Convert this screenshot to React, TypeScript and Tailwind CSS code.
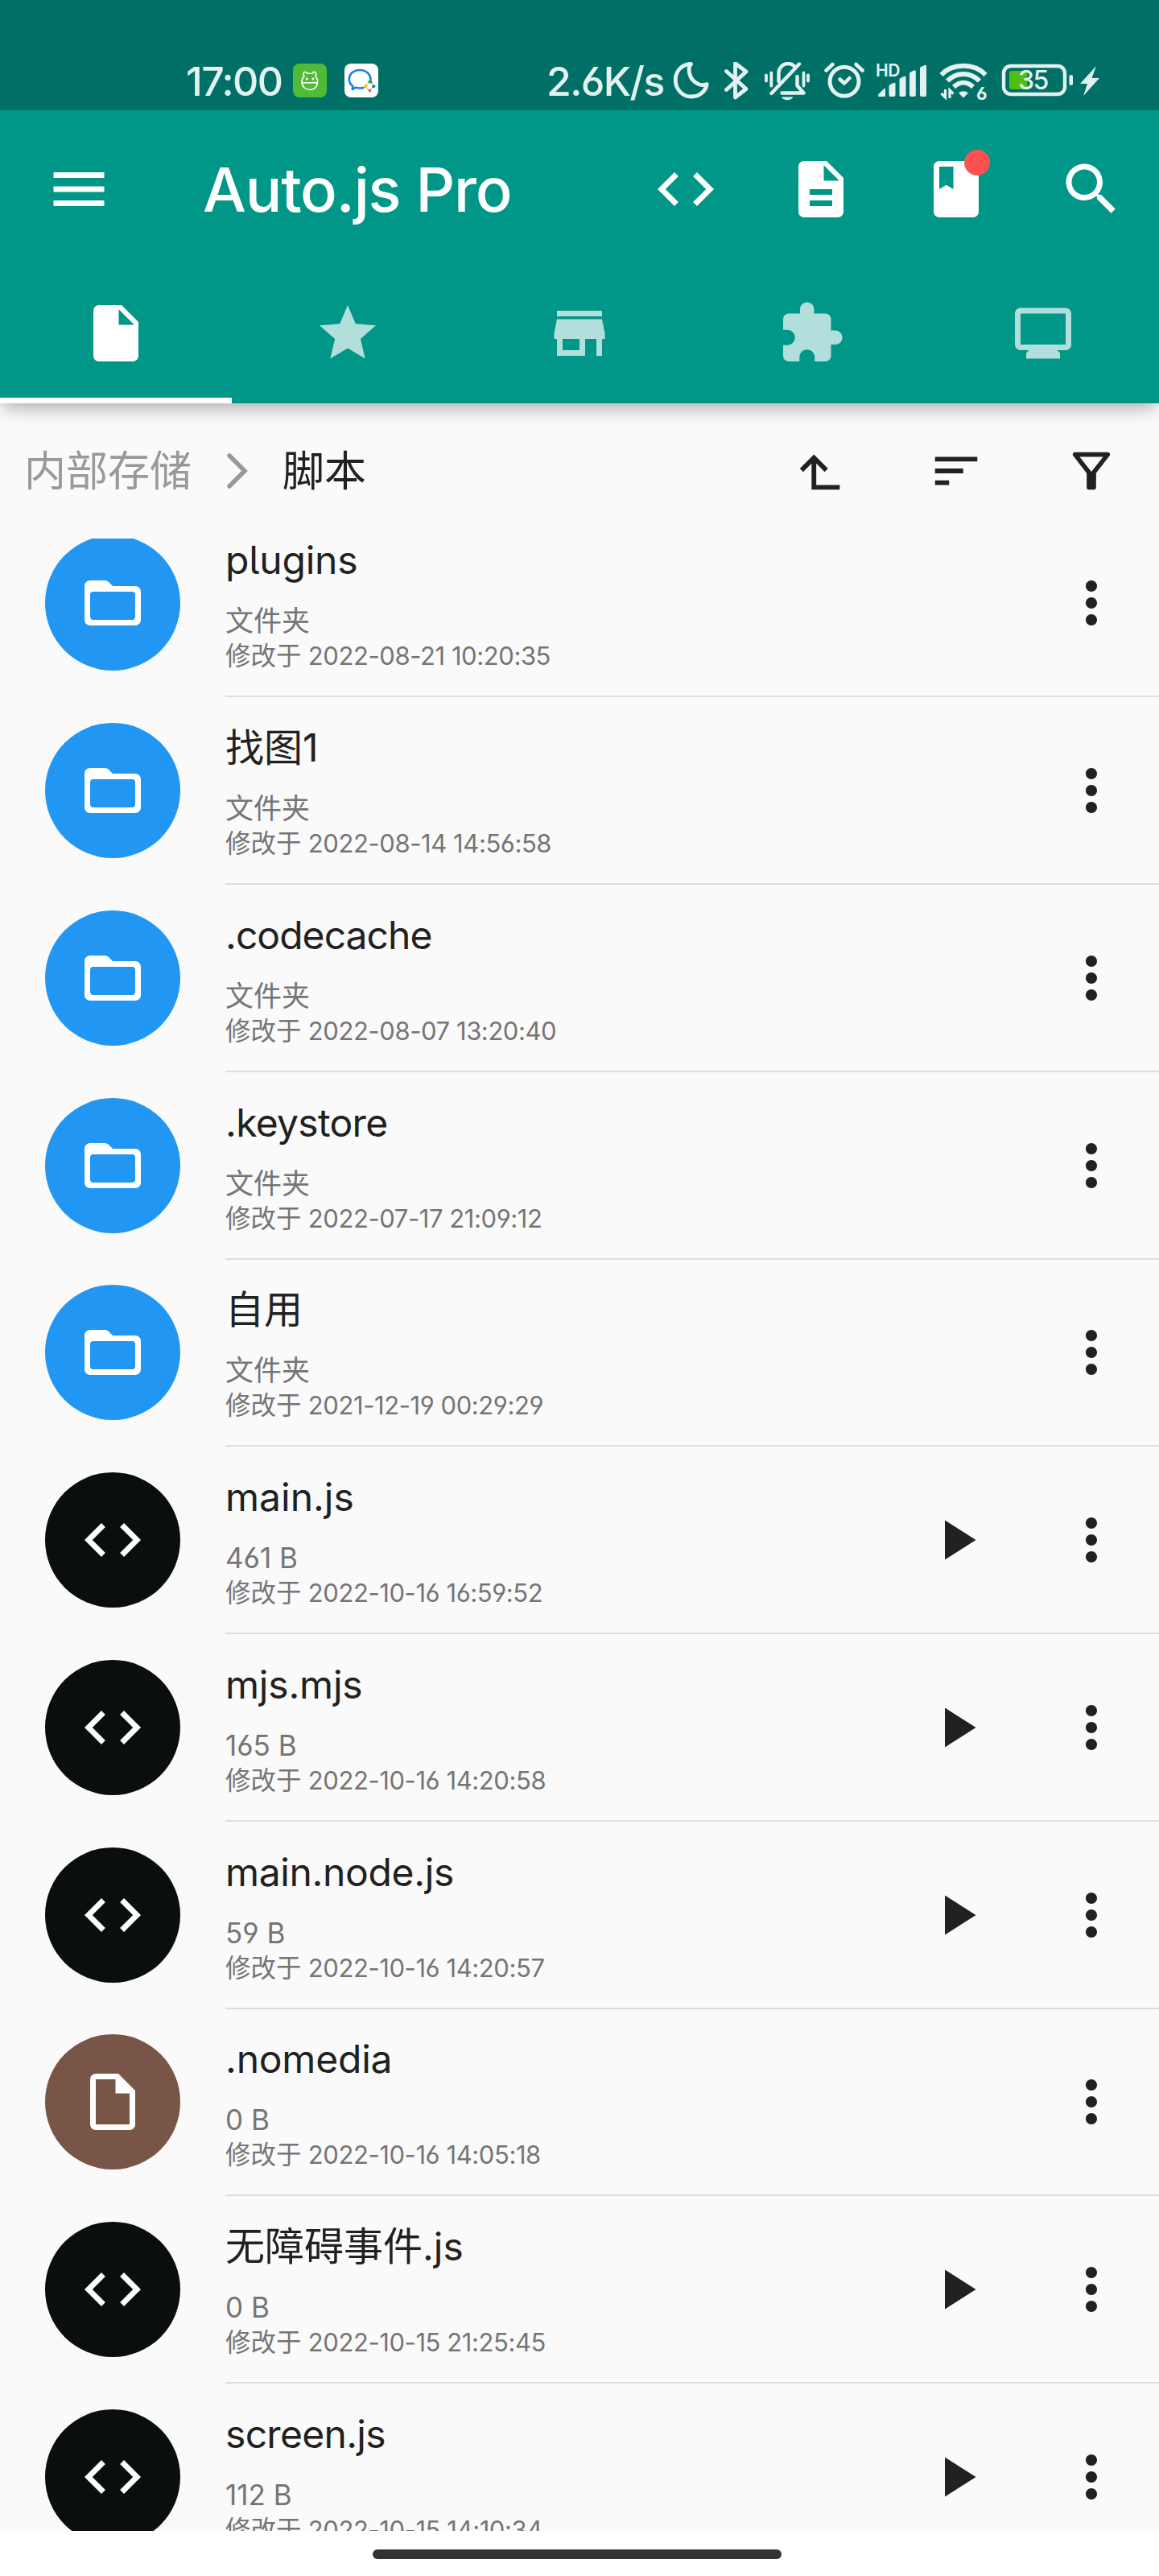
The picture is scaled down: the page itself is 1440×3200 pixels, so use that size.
import type { ReactNode } from "react";

const ICONS = {
  menu: "M3 18h18v-2H3v2zm0-5h18v-2H3v2zm0-7v2h18V6H3z",
  code: "M9.4 16.6L4.8 12l4.6-4.6L8 6l-6 6 6 6 1.4-1.4zm5.2 0l4.6-4.6-4.6-4.6L16 6l6 6-6 6-1.4-1.4z",
  description:
    "M14 2H6c-1.1 0-1.99.9-1.99 2L4 20c0 1.1.89 2 1.99 2H18c1.1 0 2-.9 2-2V8l-6-6zm2 16H8v-2h8v2zm0-4H8v-2h8v2zm-3-5V3.5L18.5 9H13z",
  book: "M18 2H6c-1.1 0-2 .9-2 2v16c0 1.1.9 2 2 2h12c1.1 0 2-.9 2-2V4c0-1.1-.9-2-2-2zM6 4h5v8l-2.5-1.5L6 12V4z",
  search:
    "M15.5 14h-.79l-.28-.27C15.41 12.59 16 11.11 16 9.5 16 5.91 13.09 3 9.5 3S3 5.91 3 9.5 5.91 16 9.5 16c1.61 0 3.09-.59 4.23-1.57l.27.28v.79l5 4.99L20.49 19l-4.99-5zm-6 0C7.01 14 5 11.99 5 9.5S7.01 5 9.5 5 14 7.01 14 9.5 11.99 14 9.5 14z",
  file: "M6 2c-1.1 0-1.99.9-1.99 2L4 20c0 1.1.89 2 1.99 2H18c1.1 0 2-.9 2-2V8l-6-6H6zm7 7V3.5L18.5 9H13z",
  star: "M12 17.27L18.18 21l-1.64-7.03L22 9.24l-7.19-.61L12 2 9.19 8.63 2 9.24l5.46 4.73L5.82 21z",
  store: "M20 4H4v2h16V4zm1 10v-2l-1-5H4l-1 5v2h1v6h10v-6h4v6h2v-6h1zm-9 4H6v-4h6v4z",
  extension:
    "M20.5 11H19V7c0-1.1-.9-2-2-2h-4V3.5C13 2.12 11.88 1 10.5 1S8 2.12 8 3.5V5H4c-1.1 0-1.99.9-1.99 2v3.8H3.5c1.49 0 2.7 1.21 2.7 2.7s-1.21 2.7-2.7 2.7H2V20c0 1.1.9 2 2 2h3.8v-1.5c0-1.49 1.21-2.7 2.7-2.7 1.49 0 2.7 1.21 2.7 2.7V22H17c1.1 0 2-.9 2-2v-4h1.5c1.38 0 2.5-1.12 2.5-2.5S21.88 11 20.5 11z",
  monitor:
    "M20 3H4c-1.1 0-2 .9-2 2v11c0 1.1.9 2 2 2h3l-1 1v2h12v-2l-1-1h3c1.1 0 2-.9 2-2V5c0-1.1-.9-2-2-2zm0 13H4V5h16v11z",
  up: "M15 11l-1.42 1.42L10 8.83V18h10v2H8V8.83l-3.58 3.59L3 11l6-6z",
  sort: "M3 18h6v-2H3v2zM3 6v2h18V6H3zm0 7h12v-2H3v2z",
  filter:
    "M7 6h10l-5.01 6.3L7 6zm-2.75-.39C6.27 8.2 10 13 10 13v6c0 .55.45 1 1 1h2c.55 0 1-.45 1-1v-6s3.72-4.8 5.74-7.39A.998.998 0 0018.95 4H5.04c-.83 0-1.3.95-.79 1.61z",
  folder:
    "M20 6h-8l-1.41-1.41C10.21 4.21 9.7 4 9.17 4H4c-1.1 0-2 .9-2 2v12c0 1.1.9 2 2 2h16c1.1 0 2-.9 2-2V8c0-1.1-.9-2-2-2zm-1 12H5c-.55 0-1-.45-1-1V9c0-.55.45-1 1-1h14c.55 0 1 .45 1 1v8c0 .55-.45 1-1 1z",
  fileOutline:
    "M14 2H6c-1.1 0-1.99.9-1.99 2L4 20c0 1.1.89 2 1.99 2H18c1.1 0 2-.9 2-2V8l-6-6zM6 20V4h7v5h5v11H6z",
  play: "M8 5v14l11-7z",
  more: "M12 8c1.1 0 2-.9 2-2s-.9-2-2-2-2 .9-2 2 .9 2 2 2zm0 2c-1.1 0-2 .9-2 2s.9 2 2 2 2-.9 2-2-.9-2-2-2zm0 6c-1.1 0-2 .9-2 2s.9 2 2 2 2-.9 2-2-.9-2-2-2z",
};

type IconName = keyof typeof ICONS;

function Icon({ name, className = "size-[84px]" }: { name: IconName; className?: string }) {
  return (
    <svg viewBox="0 0 24 24" fill="currentColor" className={`shrink-0 ${className}`}>
      <path d={ICONS[name]} />
    </svg>
  );
}

function Action({ name, className, children }: { name: IconName; className?: string; children?: ReactNode }) {
  return (
    <button className="relative flex h-[168px] w-[168px] items-center justify-center">
      <Icon name={name} className={className} />
      {children}
    </button>
  );
}

/* Status glyphs share one vertical frame: 48px tall, y 77 to 125. */
function StatusIcons() {
  return (
    <>
      <svg className="h-[48px] w-[44px]" viewBox="837 77 44 48" fill="none" stroke="currentColor" strokeWidth="4.8" strokeLinejoin="round">
        <path d="M858.500 79.500C846 80 839.300 89 839.300 99.500c0 11.500 8.500 20.500 20 20.500 9.500 0 17.500-6.500 19-15.500-3.500 1.500-8 1.500-11.500-.5-8-4-11.500-12-10.500-19.500.3-2 1-3.500 2.200-5z" />
      </svg>
      <svg className="ml-[17px] h-[48px] w-[34px]" viewBox="898 77 34 48" fill="none" stroke="currentColor" strokeWidth="4.8" strokeLinejoin="round" strokeLinecap="round">
        <path d="M902.500 88.500l24.500 22-13.500 10.500V78.500L927 89l-24.500 22.500" />
      </svg>
      <svg className="ml-[16px] h-[48px] w-[60px]" viewBox="948 77 60 48" fill="none" stroke="currentColor" strokeWidth="4.4" strokeLinejoin="round" strokeLinecap="round">
        <path d="M952 93.500v7M958.300 90.500v16M998.500 90.500v16M1004 93.500v7" strokeWidth="3.800" />
        <path d="M993 79.500l-34.500 36.500" />
        <path d="M967.500 101V91c0-6.500 5-12 11.500-12 3 0 5.500 1 7.500 2.800M990.500 95v11.500l8 9h-27" />
        <path d="M971 120.500h14.500c-1.500 2.500-4 3.800-7.200 3.800s-5.800-1.300-7.300-3.800z" fill="currentColor" stroke="none" />
      </svg>
      <svg className="ml-[14px] h-[48px] w-[54px]" viewBox="1022 77 54 48" fill="none" stroke="currentColor" strokeWidth="5" strokeLinecap="round" strokeLinejoin="round">
        <circle cx="1049" cy="101.300" r="18" />
        <path d="M1043.500 98.500l5.500 5 6.500-6.500" strokeWidth="4.500" />
        <path d="M1026.500 87.500l8-7.500M1071.500 87.500l-8-7.500" strokeWidth="4.500" />
      </svg>
      <div className="relative ml-[12px] h-[48px] w-[66px]">
        <span className="absolute left-0 top-[3px] text-[21px] font-semibold leading-[16px] tracking-[-0.5px]">HD</span>
        <svg className="h-[48px] w-[66px]" viewBox="1088 77 66 48" fill="currentColor">
          <path d="M1091 117.500l7.500-7.500q1.500-.6 1.500 1v8q0 1-1 1h-7q-1.500 0-1-2.500zM1104.500 107q0-1.500 1.500-2l4-2q2.500-.8 2.500 1v14q0 2-2 2h-4q-2 0-2-2zM1117.500 99q0-1.500 1.300-2l4.200-2q2.500-.8 2.500 1v22q0 2-2 2h-4q-2 0-2-2zM1130 91.500q0-1.500 1.500-2l4-2q2.300-.8 2.300 1v29.500q0 2-2 2h-3.800q-2 0-2-2zM1143 85q0-1.500 1.500-2l4-2q2.500-.8 2.500 1v36q0 2-2 2h-4q-2 0-2-2z" />
        </svg>
      </div>
      <div className="relative ml-[12px] h-[48px] w-[62px]">
        <svg className="h-[48px] w-[62px]" viewBox="1166 77 62 48" fill="none" stroke="currentColor" strokeWidth="6">
          <path d="M1169.500 93c14-15 41-15 55 0" />
          <path d="M1177 100.500c11-11.500 29-11.500 40 0" />
          <path d="M1185 108c7.500-7 16.500-7 24 0" />
          <path d="M1191 115.500q6-4.500 12 0l-6 6z" fill="currentColor" stroke="none" />
          <path d="M1174.500 111v10l-5-5M1180 122v-10l4.500 4.500" strokeWidth="3.200" />
        </svg>
        <span className="absolute left-[47px] top-[31px] text-[22px] font-bold leading-[16px]">6</span>
      </div>
      <div className="relative ml-[16px] h-[48px] w-[90px]">
        <svg className="h-[48px] w-[90px]" viewBox="1244 77 90 48">
          <rect x="1247" y="82" width="76" height="35" rx="9" fill="none" stroke="currentColor" strokeWidth="4.400" />
          <path d="M1257 88h19.500v23H1257q-3 0-3-3V91q0-3 3-3z" fill="#4fbd12" />
          <rect x="1328.500" y="93" width="4.500" height="13" rx="2" fill="currentColor" />
        </svg>
        <span className="absolute left-[21px] top-[7px] text-[32px] font-medium leading-[32px] tracking-[-1.5px]">35</span>
      </div>
      <svg className="ml-[6px] h-[48px] w-[28px]" viewBox="1340 77 28 48" fill="currentColor">
        <path d="M1362 82l-20 22h9l-5 15 20-22h-9.500z" />
      </svg>
    </>
  );
}

function StatusBar() {
  return (
    <div className="h-[137px] bg-[#007066] pt-[60px] text-[#e3f2f0]">
      <div className="flex h-[82px] items-center text-[50px] font-medium leading-none">
        <span className="ml-[231px] w-[133px] shrink-0 whitespace-nowrap tracking-[-1.6px]">17:00</span>
        <svg className="mb-[2px] size-[42px] shrink-0" viewBox="0 0 42 42">
          <rect width="42" height="42" rx="8" fill="#50bb36" />
          <g fill="none" stroke="#fff" strokeWidth="1.600" strokeLinejoin="round">
            <path d="M14 15.500c-2-2-1-4.800.8-5 1.500-.2 2.400.8 2.700 1.700h6.800c.3-1 1.300-2 2.800-1.700 1.800.4 2.600 3 .7 5 2 2 2.700 4.300 2.700 7 0 6-4 10-9.500 10s-10-4-10-10c0-2.700 1-5 3-7z" />
            <path d="M11 23.800h19.300" />
          </g>
          <circle cx="17.200" cy="19" r="1.500" fill="#fff" />
          <circle cx="25" cy="19" r="1.500" fill="#fff" />
        </svg>
        <svg className="mb-[2px] ml-[22px] size-[42px] shrink-0" viewBox="0 0 42 42">
          <rect width="42" height="42" rx="8" fill="#fff" />
          <path
            d="M32.500 21c.5-7.500-5.500-13-13.500-13-7.700 0-13.200 5-13.200 11.500 0 3.700 1.700 6.300 4.500 8.500l-.5 4 4-2.300c3 .8 6.500 1 9.700.2"
            fill="none"
            stroke="#1682e0"
            strokeWidth="2.600"
            strokeLinejoin="round"
            strokeLinecap="round"
          />
          <path d="M28.500 26l3-3.500M33 23.500l3 3.500M35.500 28.500l-3.500 4M27 29.500l3.500 4" stroke="#8cb36a" strokeWidth="1" />
          <path d="M28.500 23l2.500-2.500 3.700 2.300-.7 2.200z" fill="#2ba52b" />
          <path d="M34 27.500l3.200-1.300 1.500 2-2 2.300-2.300-1z" fill="#1b74d8" />
          <path d="M28.500 31.500l2 .5 2.700.3v2.200l-2.200 1.300z" fill="#ea6123" />
          <path d="M24.200 28l2.800-3 1.700 1.500-.7 3.500-2.500.5z" fill="#f8c51c" />
        </svg>
        <span className="ml-[209px] w-[158px] shrink-0 whitespace-nowrap tracking-[-1.6px]">2.6K/s</span>
        <StatusIcons />
      </div>
    </div>
  );
}

const TABS: IconName[] = ["file", "star", "store", "extension", "monitor"];

function Header() {
  return (
    <header className="relative z-10 h-[501px] bg-[#009788] text-white shadow-[0_10px_20px_-4px_rgba(0,0,0,0.3)]">
      <StatusBar />
      <div className="flex h-[196px] items-center">
        <Icon name="menu" className="ml-[56px] size-[84px]" />
        <h1 className="ml-[112px] flex-1 whitespace-nowrap text-[76px] font-medium leading-none tracking-[-1.2px]">Auto.js Pro</h1>
        <Action name="code" />
        <Action name="description" />
        <Action name="book">
          <span className="absolute left-[94px] top-[35px] size-[32px] rounded-full bg-[#fe5252]" />
        </Action>
        <Action name="search" />
      </div>
      <nav className="grid h-[168px] grid-cols-5">
        {TABS.map((name, i) => (
          <button
            key={name}
            className={`flex flex-col items-center justify-center border-b-[7px] pt-px ${i === 0 ? "border-white" : "border-transparent text-[#b2dfdb]"}`}
          >
            <Icon name={name} />
          </button>
        ))}
      </nav>
    </header>
  );
}

function PathBar() {
  return (
    <div className="flex h-[168px] items-center text-[52px] leading-none text-[#212121]">
      <span className="ml-[30px] pt-[2px] text-[#999999]">内部存储</span>
      <svg className="ml-[43px] h-[48px] w-[28px] text-[#999999]" viewBox="0 0 28 48" fill="none" stroke="currentColor" strokeWidth="5.500" strokeLinecap="round">
        <path d="M4 5l19 19L4 43" />
      </svg>
      <span className="ml-[42px] flex-1 pt-[2px]">脚本</span>
      <Action name="up" className="size-[70px]" />
      <Action name="sort" className="size-[70px]" />
      <Action name="filter" className="size-[70px]" />
    </div>
  );
}

type Kind = "folder" | "script" | "file";

interface Entry {
  name: ReactNode;
  info: string;
  modified: string;
  kind: Kind;
  tracking?: string;
  compact?: boolean;
}

const ENTRIES: Entry[] = [
  { name: "plugins", info: "文件夹", modified: "2022-08-21 10:20:35", kind: "folder", tracking: "tracking-[-0.2px]" },
  { name: "找图1", info: "文件夹", modified: "2022-08-14 14:56:58", kind: "folder" },
  { name: ".codecache", info: "文件夹", modified: "2022-08-07 13:20:40", kind: "folder", tracking: "tracking-[-0.95px]" },
  { name: ".keystore", info: "文件夹", modified: "2022-07-17 21:09:12", kind: "folder", tracking: "tracking-[-0.7px]" },
  { name: "自用", info: "文件夹", modified: "2021-12-19 00:29:29", kind: "folder", compact: true },
  { name: "main.js", info: "461 B", modified: "2022-10-16 16:59:52", kind: "script" },
  { name: "mjs.mjs", info: "165 B", modified: "2022-10-16 14:20:58", kind: "script", tracking: "tracking-[-0.2px]" },
  { name: "main.node.js", info: "59 B", modified: "2022-10-16 14:20:57", kind: "script", tracking: "tracking-[-0.35px]" },
  { name: ".nomedia", info: "0 B", modified: "2022-10-16 14:05:18", kind: "file", tracking: "tracking-[-0.2px]", compact: true },
  {
    name: (
      <>
        <span className="text-[49px]">无障碍事件</span>.js
      </>
    ),
    info: "0 B",
    modified: "2022-10-15 21:25:45",
    kind: "script",
  },
  { name: "screen.js", info: "112 B", modified: "2022-10-15 14:10:34", kind: "script", tracking: "tracking-[-0.7px]" },
];

const BADGES: Record<Kind, { color: string; icon: IconName }> = {
  folder: { color: "bg-[#2296f3]", icon: "folder" },
  script: { color: "bg-[#0a0e0f]", icon: "code" },
  file: { color: "bg-[#795548]", icon: "fileOutline" },
};

function Row({ entry }: { entry: Entry }) {
  const badge = BADGES[entry.kind];
  const inset = entry.compact ? "mt-[31px]" : "mt-[32px]";
  return (
    <li className={`flex shrink-0 ${entry.compact ? "h-[232px]" : "h-[233px]"}`}>
      <div className={`mx-[56px] flex size-[168px] shrink-0 items-center justify-center rounded-full text-white ${inset} ${badge.color}`}>
        <Icon name={badge.icon} />
      </div>
      <div className="flex flex-1 border-b-2 border-[#dedede]">
        <div className={`flex-1 whitespace-nowrap ${entry.compact ? "pt-[32px]" : "pt-[33px]"}`}>
          <div className={`mb-[24px] h-[60px] text-[48px] leading-[60px] text-[#212121] ${entry.tracking ?? ""}`}>{entry.name}</div>
          <div className="h-[43px] text-[35px] leading-[43px] text-[#757575]">{entry.info}</div>
          <div className="h-[43px] text-[31px] leading-[43px] text-[#757575]">
            <span className="text-[31.5px]">修改于</span>
            <span className="tracking-[-0.42px]"> {entry.modified}</span>
          </div>
        </div>
        <div className={`flex h-[168px] text-[#212121] ${inset}`}>
          {entry.kind === "script" && <Action name="play" />}
          <Action name="more" />
        </div>
      </div>
    </li>
  );
}

export default function App() {
  return (
    <div className="flex h-[3200px] w-[1440px] flex-col overflow-hidden bg-[#fafafa] font-['Inter','Noto_Sans_CJK_SC',sans-serif] [font-feature-settings:'cv03','cv04','cv05']">
      <Header />
      <PathBar />
      <main className="h-[2475px] shrink-0 overflow-hidden">
        <ul className="-mt-[36px] flex flex-col">
          {ENTRIES.map((entry) => (
            <Row key={entry.modified} entry={entry} />
          ))}
        </ul>
      </main>
      <div className="flex flex-1 justify-center bg-white pt-[23px]">
        <div className="mr-[6px] h-[12px] w-[508px] rounded-full bg-[#333333]" />
      </div>
    </div>
  );
}
